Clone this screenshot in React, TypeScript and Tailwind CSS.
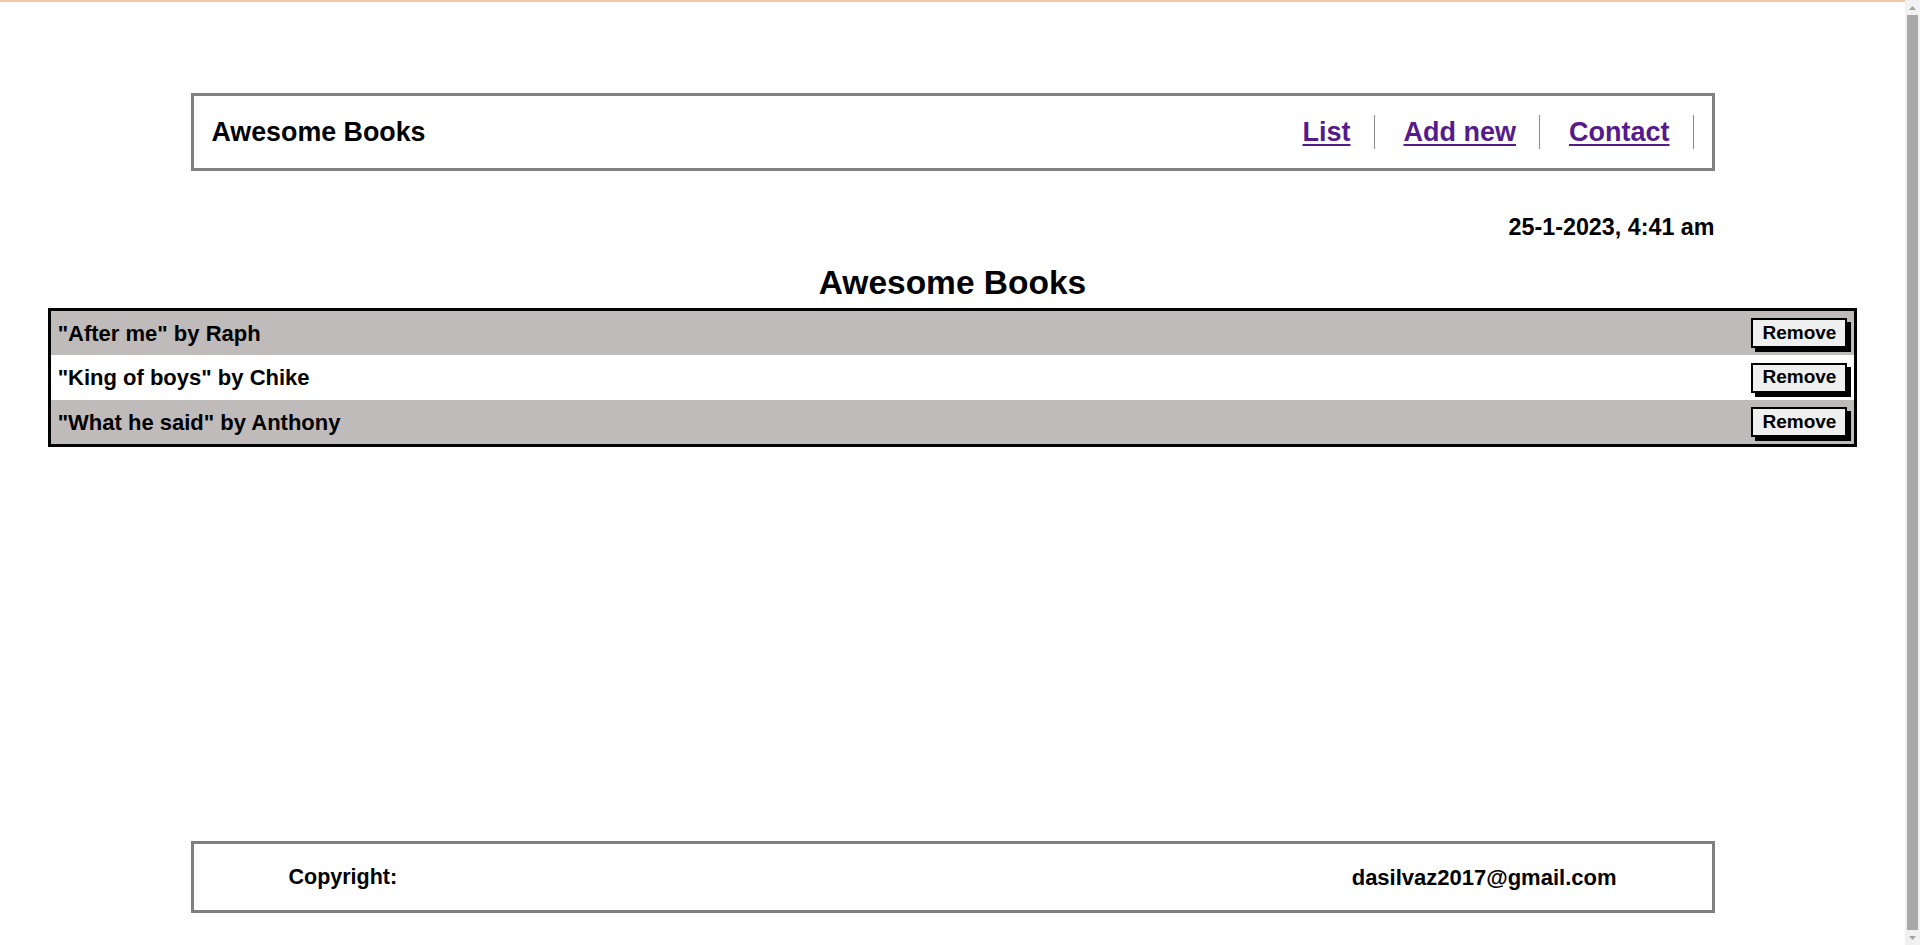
const books = [
  { title: "After me", author: "Raph" },
  { title: "King of boys", author: "Chike" },
  { title: "What he said", author: "Anthony" },
];

const links = ["List", "Add new", "Contact"];

function Scrollbar() {
  return (
    <div className="flex h-full w-[15px] shrink-0 flex-col bg-[#f1f1f1]">
      <div className="flex h-[15px] items-center justify-center">
        <svg width="7" height="4" viewBox="0 0 7 4">
          <path d="M0 4 L3.5 0 L7 4 Z" fill="#a3a3a3" />
        </svg>
      </div>
      <div className="ml-[2px] w-[11px] flex-1 bg-[#a8a8a8]" />
      <div className="flex h-[15px] items-center justify-center">
        <svg width="7" height="4" viewBox="0 0 7 4">
          <path d="M0 0 L3.5 4 L7 0 Z" fill="#a3a3a3" />
        </svg>
      </div>
    </div>
  );
}

export default function App() {
  return (
    <div className="flex h-screen overflow-hidden bg-white font-['Liberation_Sans',Arial,sans-serif] font-bold text-black">
      <div className="min-w-0 flex-1">
        <div className="h-[2px] bg-[#f0c9a0]" />

        <header className="mx-auto mt-[91px] flex h-[78px] w-[80%] items-center justify-between border-[3px] border-[#808080] px-[18px]">
          <h2 className="text-[26.8px] leading-none">Awesome Books</h2>
          <ul className="flex items-center">
            {links.map((l, i) => (
              <li
                key={l}
                className={`flex h-[34px] items-center border-r border-[#8a8a8a] pr-[23px] ${i === 0 ? "pl-0" : "pl-[29px]"}`}
              >
                <a href="#" className="text-[27px] leading-none text-[#551a8b] underline underline-offset-[3px]">
                  {l}
                </a>
              </li>
            ))}
          </ul>
        </header>

        <div className="mx-auto mt-[43px] w-[80%] text-right text-[23.3px] leading-[26px]">25-1-2023, 4:41 am</div>

        <h1 className="mt-[24px] text-center text-[33.5px] leading-[38px]">Awesome Books</h1>

        <div className="mx-auto mt-[6px] w-[95%] border-[3px] border-black">
          {books.map((b, i) => (
            <div
              key={b.title}
              className={`flex items-center justify-between px-[7px] ${i === 1 ? "h-[45px] bg-white" : "h-[44px] bg-[#c0bbbb]"}`}
            >
              <span className="text-[22px]">
                "{b.title}" by {b.author}
              </span>
              <button className="flex h-[30px] items-center border-2 border-black bg-[#efefef] px-[9px] text-[19px] shadow-[4px_4px_0_#000]">
                Remove
              </button>
            </div>
          ))}
        </div>

        <footer className="mx-auto mt-[394px] flex h-[72px] w-[80%] items-center justify-between border-[3px] border-[#808080] px-[95px]">
          <span className="text-[21.5px]">Copyright:</span>
          <span className="text-[22px]">dasilvaz2017@gmail.com</span>
        </footer>
      </div>
      <Scrollbar />
    </div>
  );
}
